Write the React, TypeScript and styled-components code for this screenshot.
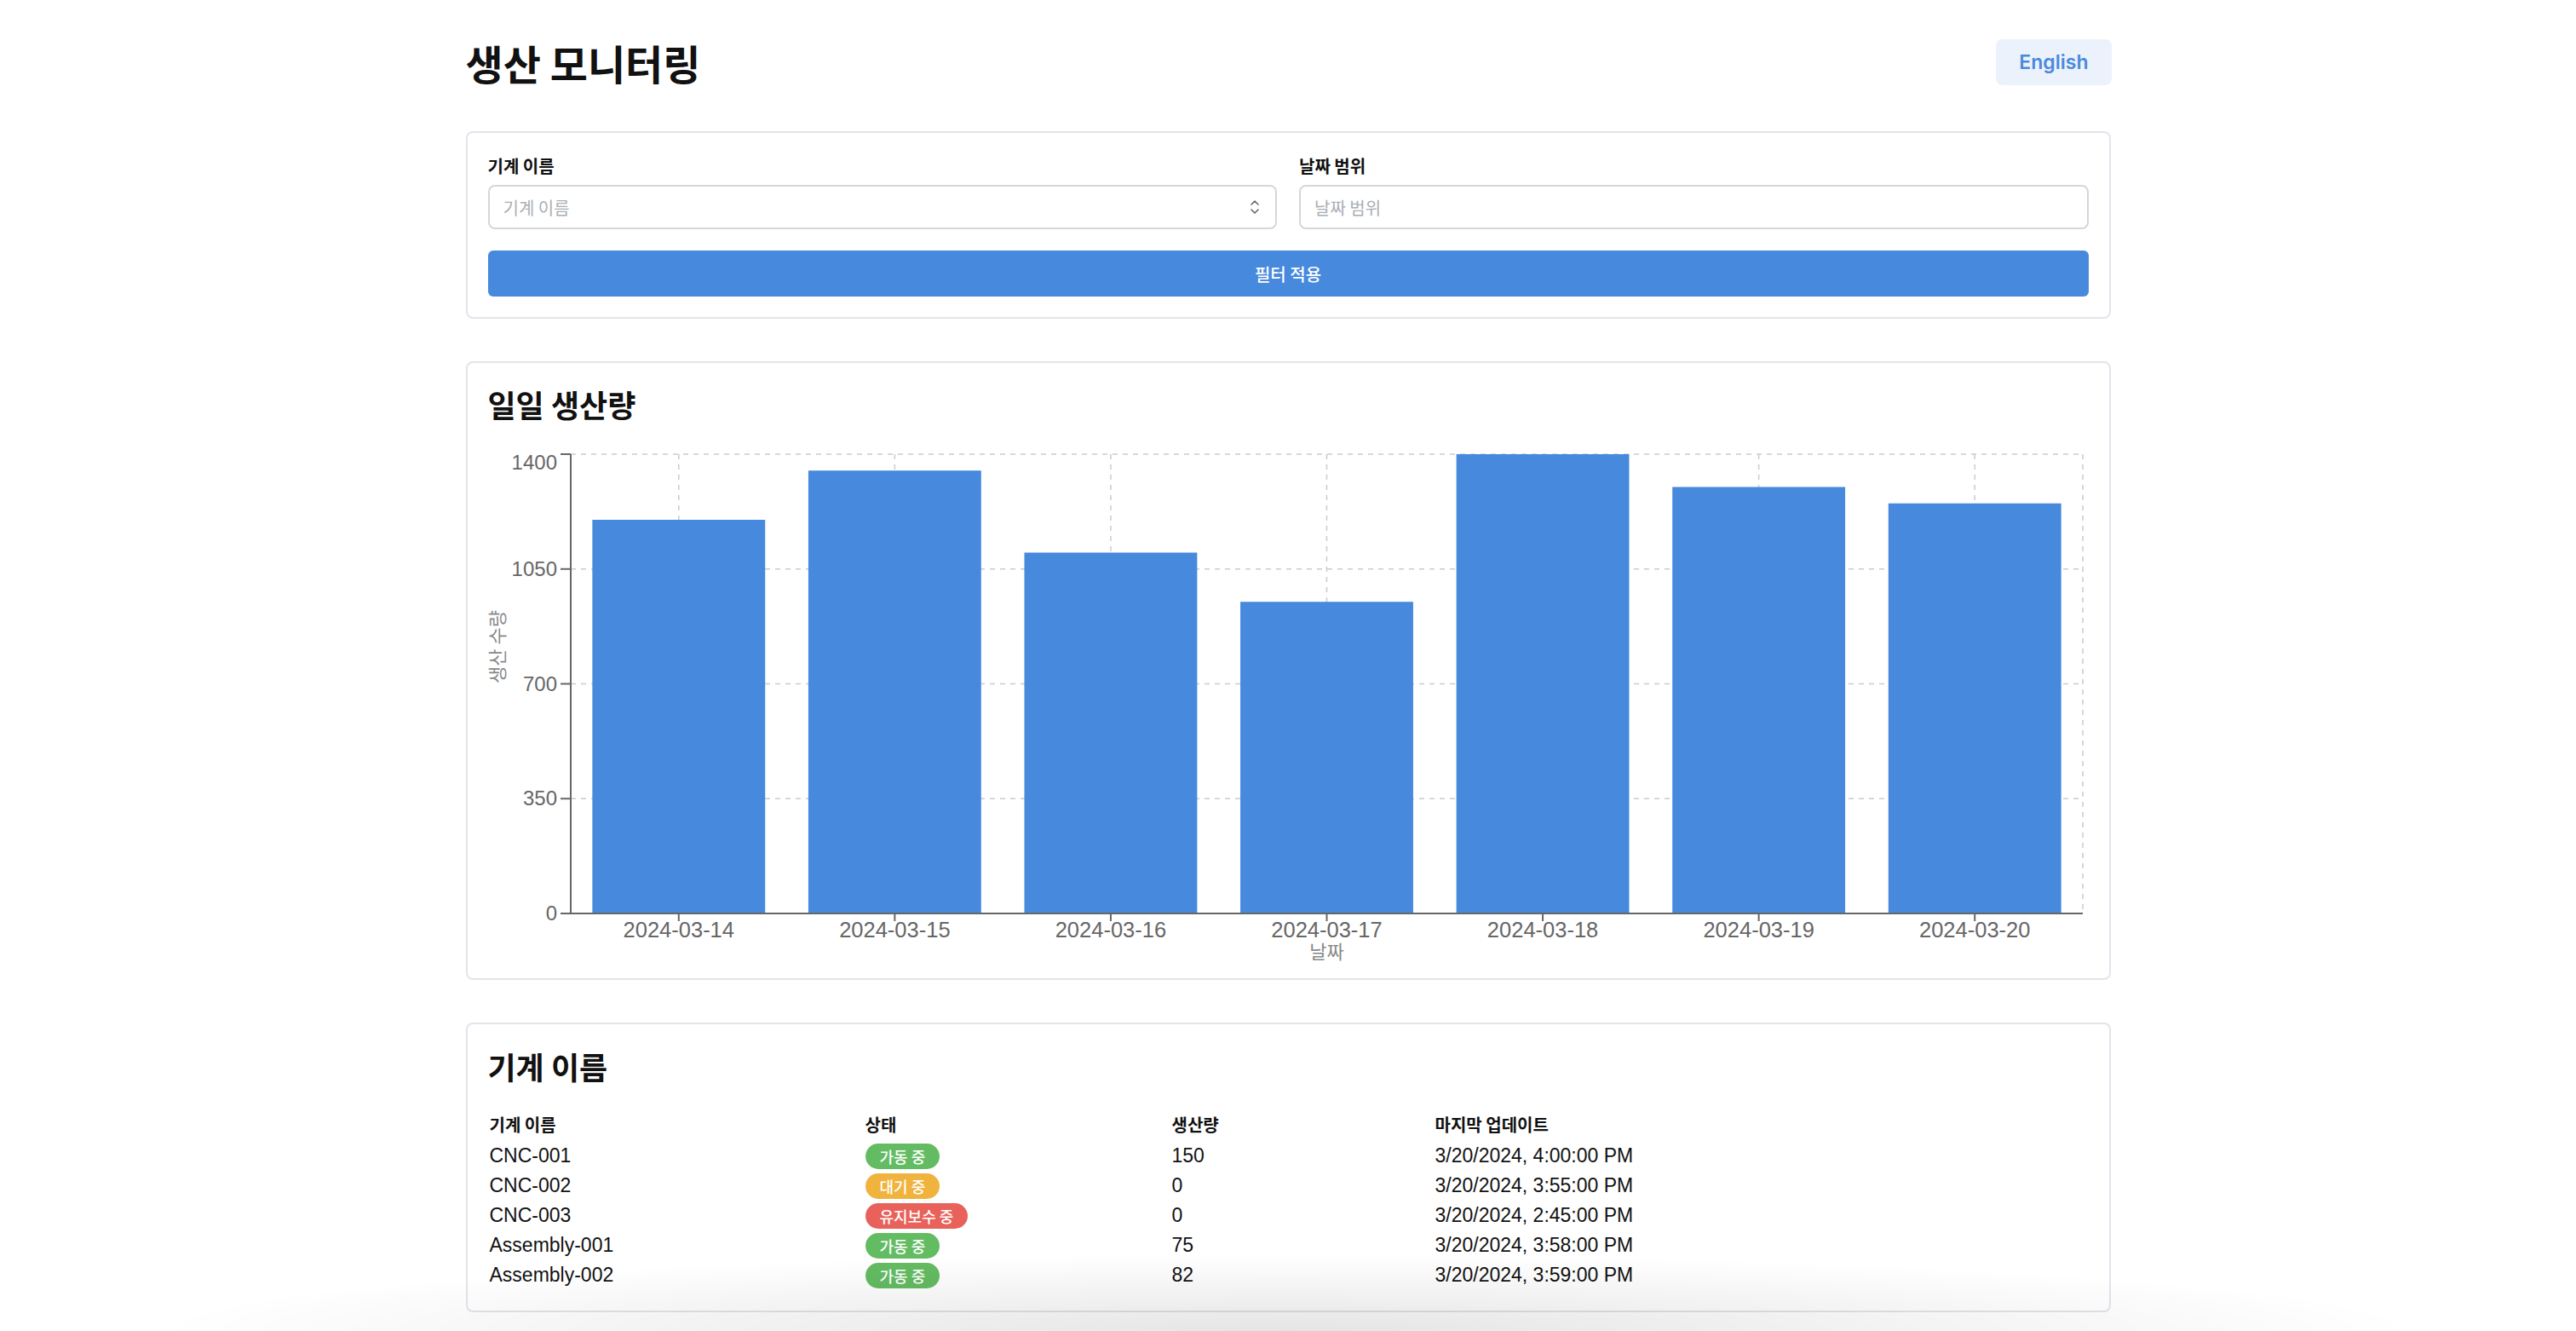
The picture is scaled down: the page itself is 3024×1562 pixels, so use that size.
import React from 'react';
import styled, { createGlobalStyle } from 'styled-components';

const GlobalStyle = createGlobalStyle`
  html, body {
    margin: 0;
    padding: 0;
    background: #ffffff;
  }
  body {
    font-family: "Liberation Sans", "Noto Sans CJK KR", sans-serif;
    color: #111111;
  }
  * {
    box-sizing: border-box;
  }
`;

interface DailyOutput {
  date: string;
  count: number;
}

type Status = 'running' | 'idle' | 'maintenance';

interface Machine {
  name: string;
  status: Status;
  output: number;
  updatedAt: string;
}

const daily: DailyOutput[] = [
  { date: '2024-03-14', count: 1200 },
  { date: '2024-03-15', count: 1350 },
  { date: '2024-03-16', count: 1100 },
  { date: '2024-03-17', count: 950 },
  { date: '2024-03-18', count: 1400 },
  { date: '2024-03-19', count: 1300 },
  { date: '2024-03-20', count: 1250 }
];

const machines: Machine[] = [
  { name: 'CNC-001', status: 'running', output: 150, updatedAt: '3/20/2024, 4:00:00 PM' },
  { name: 'CNC-002', status: 'idle', output: 0, updatedAt: '3/20/2024, 3:55:00 PM' },
  { name: 'CNC-003', status: 'maintenance', output: 0, updatedAt: '3/20/2024, 2:45:00 PM' },
  { name: 'Assembly-001', status: 'running', output: 75, updatedAt: '3/20/2024, 3:58:00 PM' },
  { name: 'Assembly-002', status: 'running', output: 82, updatedAt: '3/20/2024, 3:59:00 PM' }
];

const statusLabel: Record<Status, string> = {
  running: '가동 중',
  idle: '대기 중',
  maintenance: '유지보수 중'
};

const statusColor: Record<Status, string> = {
  running: '#64bc62',
  idle: '#f0b33e',
  maintenance: '#e8615a'
};

const Page = styled.div`
  width: 1931px;
  margin: 0 auto;
  padding-top: 44px;
`;

const Header = styled.header`
  display: flex;
  align-items: center;
  justify-content: space-between;
  margin-bottom: 52px;
`;

const PageTitle = styled.h1`
  margin: 0;
  font-family: "Noto Sans CJK KR", sans-serif;
  font-size: 48px;
  line-height: 58px;
  font-weight: 700;
  color: #111;
`;

const LangButton = styled.button`
  height: 54px;
  padding: 0 27px;
  margin-right: -1px;
  border: none;
  border-radius: 8px;
  background: #ebf2fc;
  color: #4a89dc;
  font-family: Inter, "Liberation Sans", sans-serif;
  font-size: 23px;
  font-weight: 600;
  cursor: pointer;
`;

const Card = styled.section`
  background: #fff;
  border: 2px solid #e1e5ea;
  border-radius: 8px;
  padding: 24px;
  margin-bottom: 50px;
`;

const CardTitle = styled.h2`
  margin: 0 0 25px;
  font-family: "Noto Sans CJK KR", sans-serif;
  font-size: 36px;
  line-height: 48px;
  font-weight: 700;
  color: #111;
`;

const TableTitle = styled(CardTitle)`
  line-height: 50px;
  margin-bottom: 23px;
`;

const FilterGrid = styled.div`
  display: grid;
  grid-template-columns: 1fr 1fr;
  column-gap: 26px;
`;

const Field = styled.div`
  display: flex;
  flex-direction: column;
`;

const Label = styled.label`
  font-family: "Noto Sans CJK KR", sans-serif;
  font-size: 20px;
  line-height: 30px;
  font-weight: 600;
  color: #111;
  margin-bottom: 7px;
`;

const controlBase = `
  height: 52px;
  border: 2px solid #d3d7dc;
  border-radius: 8px;
  background: #fff;
  padding: 0 16px;
  font-family: "Noto Sans CJK KR", sans-serif;
  font-size: 20px;
`;

const SelectBox = styled.div`
  ${controlBase}
  display: flex;
  align-items: center;
  justify-content: space-between;
  color: #a9aeb4;
  padding-right: 18px;
`;

const TextInput = styled.input`
  ${controlBase}
  width: 100%;
  color: #333;
  outline: none;

  &::placeholder {
    color: #a9aeb4;
  }
`;

const ApplyButton = styled.button`
  width: 100%;
  height: 54px;
  margin-top: 25px;
  border: none;
  border-radius: 6px;
  background: #4789dd;
  color: #fff;
  font-family: "Noto Sans CJK KR", sans-serif;
  font-size: 20px;
  font-weight: 500;
  cursor: pointer;
`;

const ChartSvg = styled.svg`
  display: block;
  overflow: visible;
  font-family: "Liberation Sans", "Noto Sans CJK KR", sans-serif;
`;

const Table = styled.table`
  width: 100%;
  border-collapse: collapse;
  font-family: "Liberation Sans", "Noto Sans CJK KR", sans-serif;
  font-size: 23px;
  color: #111;
`;

const Th = styled.th`
  height: 40px;
  padding: 0 2px;
  text-align: left;
  font-family: "Noto Sans CJK KR", sans-serif;
  font-size: 20px;
  font-weight: 700;
`;

const Td = styled.td`
  height: 35px;
  padding: 0 2px;
  vertical-align: middle;
`;

const Badge = styled.span<{ $color: string }>`
  display: inline-flex;
  align-items: center;
  height: 30px;
  padding: 0 17px;
  border-radius: 15px;
  background: ${p => p.$color};
  color: #fff;
  font-family: "Noto Sans CJK KR", sans-serif;
  font-size: 18px;
  font-weight: 500;
`;

const WindowShade = styled.div`
  position: fixed;
  left: 0;
  right: 0;
  bottom: 0;
  height: 90px;
  pointer-events: none;
  background: radial-gradient(ellipse 44% 100% at 50% 100%, rgba(0, 0, 0, 0.1), rgba(0, 0, 0, 0) 100%);
`;

const UpDownIcon = () => (
  <svg width="12" height="20" viewBox="0 0 12 20" fill="none" stroke="#666" strokeWidth="1.6" strokeLinecap="round" strokeLinejoin="round">
    <path d="M2 7 L6 3 L10 7" />
    <path d="M2 13 L6 17 L10 13" />
  </svg>
);

// chart geometry, in px of the svg
const W = 1879;
const H = 601;
const X0 = 97;
const X1 = 1872;
const Y0 = 10;
const Y1 = 549;
const MAX = 1400;
const TICKS = [0, 350, 700, 1050, 1400];

const DailyChart = () => {
  const band = (X1 - X0) / daily.length;
  const barW = band * 0.8;
  const y = (v: number) => Y1 - (v / MAX) * (Y1 - Y0);
  const cx = (i: number) => X0 + band * (i + 0.5);

  return (
    <ChartSvg width={W} height={H} viewBox={`0 0 ${W} ${H}`}>
      <g stroke="#cccccc" strokeWidth="1.5" strokeDasharray="6 6">
        {TICKS.map(t => (
          <line key={t} x1={X0} x2={X1} y1={y(t)} y2={y(t)} />
        ))}
        {daily.map((d, i) => (
          <line key={d.date} x1={cx(i)} x2={cx(i)} y1={Y0} y2={Y1} />
        ))}
        <line x1={X1} x2={X1} y1={Y0} y2={Y1} />
      </g>

      {daily.map((d, i) => (
        <rect
          key={d.date}
          x={cx(i) - barW / 2}
          y={y(d.count)}
          width={barW}
          height={Y1 - y(d.count)}
          fill="#4789dd"
        />
      ))}

      <g stroke="#666" strokeWidth="2">
        <line x1={X0} x2={X0} y1={Y0} y2={Y1} />
        <line x1={X0} x2={X1} y1={Y1} y2={Y1} />
        {TICKS.map(t => (
          <line key={t} x1={X0 - 12} x2={X0} y1={y(t)} y2={y(t)} />
        ))}
        {daily.map((d, i) => (
          <line key={d.date} x1={cx(i)} x2={cx(i)} y1={Y1} y2={Y1 + 9} />
        ))}
      </g>

      <g fill="#666" fontSize="24">
        {TICKS.map(t => (
          <text key={t} x={X0 - 16} y={t === MAX ? y(t) + 18 : y(t) + 8} textAnchor="end">
            {t}
          </text>
        ))}
      </g>
      <g fill="#666" fontSize="25.5">
        {daily.map((d, i) => (
          <text key={d.date} x={cx(i)} y={Y1 + 28} textAnchor="middle">
            {d.date}
          </text>
        ))}
      </g>

      <g fill="#888" fontSize="22" fontFamily='"Noto Sans CJK KR", sans-serif'>
        <text x={(X0 + X1) / 2} y={Y1 + 53} textAnchor="middle">
          날짜
        </text>
        <text x={19} y={236} textAnchor="middle" transform="rotate(-90 19 236)">
          생산 수량
        </text>
      </g>
    </ChartSvg>
  );
};

export default function App() {
  return (
    <>
      <GlobalStyle />
      <Page>
        <Header>
          <PageTitle>생산 모니터링</PageTitle>
          <LangButton>English</LangButton>
        </Header>

        <Card>
          <FilterGrid>
            <Field>
              <Label>기계 이름</Label>
              <SelectBox role="button">
                <span>기계 이름</span>
                <UpDownIcon />
              </SelectBox>
            </Field>
            <Field>
              <Label>날짜 범위</Label>
              <TextInput placeholder="날짜 범위" />
            </Field>
          </FilterGrid>
          <ApplyButton>필터 적용</ApplyButton>
        </Card>

        <Card>
          <CardTitle>일일 생산량</CardTitle>
          <DailyChart />
        </Card>

        <Card>
          <TableTitle>기계 이름</TableTitle>
          <Table>
            <colgroup>
              <col style={{ width: 441 }} />
              <col style={{ width: 360 }} />
              <col style={{ width: 309 }} />
              <col />
            </colgroup>
            <thead>
              <tr>
                <Th>기계 이름</Th>
                <Th>상태</Th>
                <Th>생산량</Th>
                <Th>마지막 업데이트</Th>
              </tr>
            </thead>
            <tbody>
              {machines.map(m => (
                <tr key={m.name}>
                  <Td>{m.name}</Td>
                  <Td>
                    <Badge $color={statusColor[m.status]}>{statusLabel[m.status]}</Badge>
                  </Td>
                  <Td>{m.output}</Td>
                  <Td>{m.updatedAt}</Td>
                </tr>
              ))}
            </tbody>
          </Table>
        </Card>
      </Page>
      <WindowShade />
    </>
  );
}
